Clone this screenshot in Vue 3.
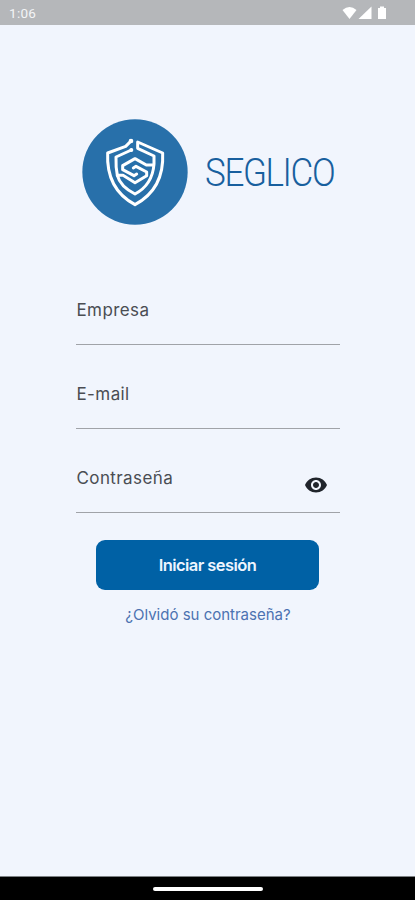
<script setup>
import { ref } from 'vue'

const fields = ref([
  { label: 'Empresa', type: 'text' },
  { label: 'E-mail', type: 'email' },
  { label: 'Contraseña', type: 'password' },
])
</script>

<template>
  <div class="screen">
    <header class="status">
      <span class="time">1:06</span>
      <svg class="sysicons" width="46" height="16" viewBox="0 0 46 16" fill="#fff">
        <path d="M0.5 4Q7.500 -2 14.500 4L7.500 13Z" />
        <path d="M29.500 0.500V13H16.500Z" />
        <path d="M36 2H38V0.500H42V2H44V13H36Z" />
      </svg>
    </header>
    <main class="content">
      <div class="brand">
        <svg class="logo" width="106" height="106" viewBox="20 25 318 318" fill="none" stroke="#fff" stroke-width="9" stroke-linejoin="round" stroke-linecap="round">
          <circle cx="179" cy="184" r="158" fill="#2870aa" stroke="none" />
          <path d="M166 92L151 107L97 127C94 190 116 248 179 282C242 248 265 190 262 127L187 94V113L236 136V160C233 200 215 231 179 250C148 234 131 213 126 194H143L179 216L214 195V184L182 167L174 172" />
          <path d="M168 118L122 139Q121 170 126 194" />
          <path d="M235 163H213L179 144L142 165V177L176 195L184 190" />
          <circle cx="167" cy="91" r="5" fill="#fff" stroke-width="4" />
          <circle cx="168" cy="118" r="4" fill="#fff" stroke-width="4" />
        </svg>
        <span class="name">SEGLICO</span>
      </div>
      <form class="form">
        <div v-for="f in fields" :key="f.label" class="field">
          <label>{{ f.label }}</label>
          <svg v-if="f.type === 'password'" class="eye" width="24" height="24" viewBox="0 0 24 24" fill="#20242b">
            <path d="M12 4.500C7 4.500 2.730 7.610 1 12c1.730 4.390 6 7.500 11 7.500s9.270-3.110 11-7.500c-1.730-4.390-6-7.500-11-7.500zM12 17c-2.760 0-5-2.240-5-5s2.240-5 5-5 5 2.240 5 5-2.240 5-5 5zm0-8c-1.660 0-3 1.340-3 3s1.340 3 3 3 3-1.340 3-3-1.340-3-3-3z" />
          </svg>
        </div>
        <button type="button" class="submit"><span>Iniciar sesión</span></button>
        <a class="forgot">¿Olvidó su contraseña?</a>
      </form>
    </main>
    <footer class="nav"><span class="pill"></span></footer>
  </div>
</template>

<style>
body { margin: 0; }
</style>

<style scoped>
.screen { display: flex; flex-direction: column; width: 415px; height: 900px; background: #f1f5fd; font-family: Inter, Roboto, sans-serif; overflow: hidden; }
.status { box-sizing: border-box; display: flex; justify-content: space-between; height: 25px; padding: 5px 27px 0 9px; background: #b5b7ba; color: #f3f4f6; }
.sysicons { margin-top: 1px; }
.time { font-family: Roboto, sans-serif; font-size: 13.500px; line-height: 17px; letter-spacing: 0.3px; }
.content { flex: 1; padding: 94px 75px 0 76px; }
.brand { display: flex; align-items: center; gap: 17px; height: 106px; margin-left: 6px; }
.logo { flex: none; }
.name { font-family: Roboto, sans-serif; color: #185f9e; font-size: 38px; font-weight: 300; line-height: 44px; letter-spacing: -1.5px; white-space: nowrap; transform: translateY(1px) scaleX(0.922); transform-origin: left center; }
.form { display: flex; flex-direction: column; margin-top: 36px; }
.field { box-sizing: border-box; display: flex; justify-content: space-between; height: 84px; padding-top: 38px; border-bottom: 1px solid #a0a3a8; }
.field:first-child { height: 84.400px; }
.field label { padding-left: 0.500px; font-size: 17px; font-weight: 370; line-height: 22px; letter-spacing: 0.400px; color: #4a4d53; }
.eye { margin: 6px 12.500px 0 0; }
.submit { display: flex; align-items: center; justify-content: center; width: 223px; height: 50px; margin: 27px 0 0 20px; padding: 0; border: 0; border-radius: 9px; background: #0061a5; color: #eef5ff; font: 600 16.500px/22px Inter, sans-serif; letter-spacing: -0.580px; }
.forgot { margin-top: 14px; text-align: center; font-size: 15px; font-weight: 370; line-height: 22px; color: #4c72b1; }
.nav { display: flex; justify-content: center; box-sizing: border-box; height: 24px; padding-top: 10px; background: #000; border-top: 1px solid #7d8184; }
.pill { width: 110px; height: 4px; border-radius: 2px; background: #fff; }
</style>
